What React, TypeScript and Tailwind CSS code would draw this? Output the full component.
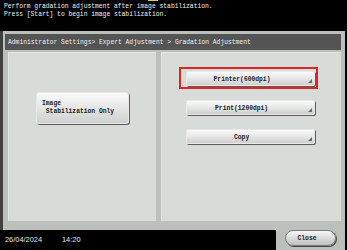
import React from "react";

function Mono({ text, center }: { text: string; center?: boolean }) {
  return (
    <span
      className={
        "inline-block whitespace-pre scale-x-[0.79] " +
        (center ? "origin-center" : "origin-left")
      }
    >
      {text}
    </span>
  );
}

function Corner() {
  return (
    <svg className="absolute right-[2px] bottom-[2px]" width="4" height="4" viewBox="0 0 4 4">
      <path d="M4 0 L4 4 L0 4 Z" fill="#6a6a6a" />
    </svg>
  );
}

function MenuButton({ label, selected }: { label: string; selected?: boolean }) {
  return (
    <div className="relative self-start">
      {selected && (
        <div className="absolute -left-[7px] -top-[4px] -right-[3px] -bottom-[3px] border-2 border-[#e02424]" />
      )}
      <div className="relative h-[15px] w-[129px] rounded-[2px] bg-gradient-to-b from-[#fbfbfb] to-[#cfd1cf] shadow-[1px_1px_0_#5c5c5c] border border-[#e8e8e8] flex items-center justify-center pr-[17px] text-[8px] leading-[8px] font-bold text-[#222]">
        <Mono text={label} center />
        <Corner />
      </div>
    </div>
  );
}

export default function App() {
  return (
    <div className="relative w-[347px] h-[250px] bg-black overflow-hidden flex flex-col font-['Liberation_Mono',monospace]">
      <div className="absolute left-[148px] top-0 w-[10px] h-[1px] bg-[#d9c86a]" />

      <div className="h-[31px] pl-[4px] pt-[2px] text-[8px] leading-[8px] text-[#f2f2f2]">
        <div><Mono text="Perform gradation adjustment after image stabilization." /></div>
        <div><Mono text="Press [Start] to begin image stabilization." /></div>
      </div>

      <div className="h-[199px] mr-[2px] border-l-[3px] border-[#404040] bg-[#bcc0bd] pl-[2px] pr-[4px] pt-[3px] flex flex-col">
        <div className="h-[16px] bg-[#545454] pl-[3px] flex items-center text-[8px] leading-[8px] text-[#f0f0f0]">
          <Mono text="Administrator Settings> Expert Adjustment > Gradation Adjustment" />
        </div>

        <div className="mt-[2px] h-[169px] pl-[3px] flex gap-[5px]">
          <div className="w-[148px] bg-[#d8dcd9] border-t border-l border-[#e3e7e4] pl-[27px] pt-[39px]">
            <div className="w-[93px] h-[32px] rounded-[3px] bg-gradient-to-b from-[#fbfbfb] to-[#cdd0cd] shadow-[1px_1px_0_#5c5c5c] border border-[#e8e8e8] pl-[5px] pt-[6px] text-[8px] leading-[8px] font-bold text-[#222]">
              <div><Mono text="Image" /></div>
              <div><Mono text=" Stabilization Only" /></div>
            </div>
          </div>

          <div className="flex-1 bg-[#d8dcd9] border-t border-l border-[#e3e7e4] pl-[24px] pt-[18px] flex flex-col gap-[14px]">
            <MenuButton label="Printer(600dpi)" selected />
            <MenuButton label="Print(1200dpi)" />
            <MenuButton label="Copy" />
          </div>
        </div>
      </div>

      <div className="h-[20px] mr-[2px] flex">
        <div className="flex-1 flex items-center pl-[5px] gap-[20px] text-[7.4px] text-[#e6e6e6] font-['Liberation_Sans',sans-serif]">
          <span>26/04/2024</span>
          <span>14:20</span>
        </div>
        <div className="w-[69px] bg-[#bcc0bd] pl-[9px]">
          <div className="w-[51px] h-[16px] rounded-full border border-[#7a7a7a] bg-gradient-to-b from-[#f6f6f6] to-[#bfc1bf] shadow-[1px_1px_0_#4a4a4a] flex items-center justify-center pr-[6px] text-[8px] leading-[8px] font-bold text-[#222]">
            <Mono text="Close" center />
          </div>
        </div>
      </div>
    </div>
  );
}
